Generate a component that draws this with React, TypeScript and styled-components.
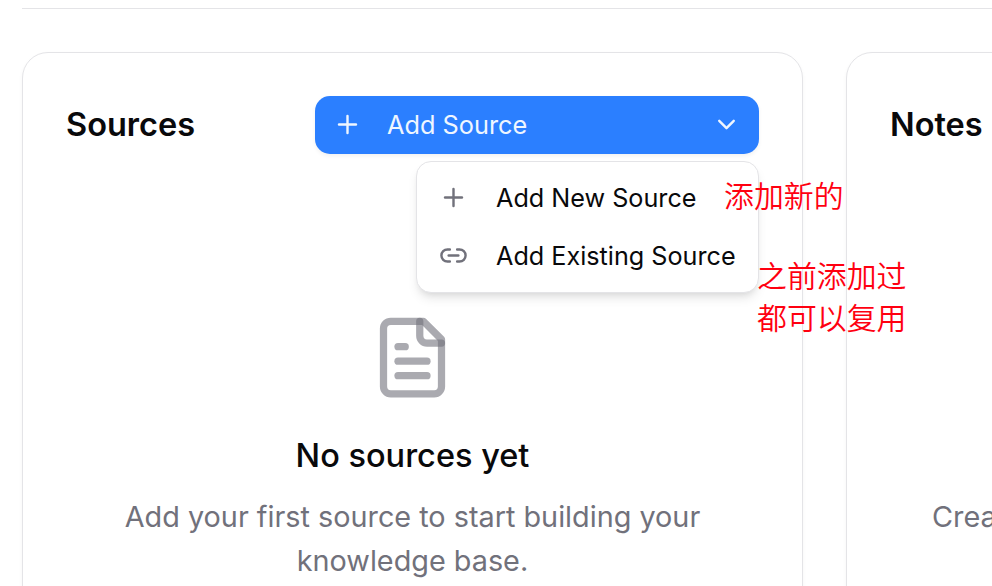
import { ChevronDown, Link2, Plus } from "lucide-react";
import styled, { createGlobalStyle } from "styled-components";

const GlobalStyle = createGlobalStyle`
     * {
          box-sizing: border-box;
     }

     body {
          margin: 0;
          background-color: #fff;
          color: #09090b;
          font-family: Inter, "Noto Sans CJK SC", sans-serif;
          overflow: hidden;
     }
`;

const Page = styled.main`
     position: relative;
     width: 992px;
     height: 586px;
     padding: 8px 0 0 22px;
     overflow: hidden;
`;

const Divider = styled.hr`
     height: 1px;
     margin: 0 0 43px;
     border: 0;
     background-color: #e4e4e7;
`;

const Columns = styled.div`
     display: flex;
     gap: 43px;
`;

const Card = styled.section`
     flex: 0 0 781px;
     height: 640px;
     padding: 43px;
     border: 1px solid #e4e4e7;
     border-radius: 26px;
     box-shadow: 0 2px 4px rgba(0, 0, 0, 0.04);
`;

const CardHeader = styled.header`
     display: flex;
     align-items: center;
     justify-content: space-between;
     height: 58px;
`;

const CardTitle = styled.h2`
     margin: 0;
     font-size: 32.5px;
     font-weight: 600;
     line-height: 44px;
`;

const MenuAnchor = styled.div`
     position: relative;
`;

const AddButton = styled.button`
     display: flex;
     align-items: center;
     gap: 25px;
     width: 444px;
     height: 58px;
     padding: 0 18px 1px;
     border: 0;
     border-radius: 15px;
     background-color: #2b7fff;
     color: #eff6ff;
     font: 400 25.3px Inter, sans-serif;
     box-shadow: 0 2px 4px rgba(0, 0, 0, 0.06);
`;

const ButtonLabel = styled.span`
     flex: 1;
     line-height: 36px;
     padding-top: 1px;
     text-align: left;
`;

const Menu = styled.ul`
     position: absolute;
     top: 65px;
     right: 0;
     width: 343px;
     margin: 0;
     padding: 7px;
     border: 1px solid #e4e4e7;
     border-radius: 15px;
     background-color: #fff;
     box-shadow: 0 7px 11px -2px rgba(0, 0, 0, 0.1), 0 4px 7px -4px rgba(0, 0, 0, 0.1);
     list-style: none;
`;

const MenuItem = styled.li`
     display: flex;
     align-items: center;
     gap: 28px;
     height: 58px;
     padding: 0 14px 1px 15px;
     font-size: 25.2px;
     line-height: 36px;
     white-space: nowrap;

     svg {
          flex: none;
          color: #71717b;
     }
`;

const EmptyState = styled.div`
     display: flex;
     flex-direction: column;
     align-items: center;
     padding: 160px 43px 0;
     text-align: center;
`;

const FileIcon = styled.svg`
     width: 87px;
     height: 87px;
     fill: none;
     stroke: #71717b;
     stroke-width: 2;
     stroke-linecap: round;
     stroke-linejoin: round;
     stroke-opacity: 0.6;
`;

const EmptyTitle = styled.h3`
     margin: 33px 0 17px;
     font-size: 32.5px;
     font-weight: 500;
     line-height: 44px;
`;

const EmptyText = styled.p`
     margin: 0;
     color: #71717b;
     font-size: 28.8px;
     line-height: 44px;
`;

const NotesText = styled(EmptyText)`
     padding: 341px 0 0 42px;
     white-space: nowrap;
`;

const Annotation = styled.p<{ $x: number; $y: number }>`
     position: absolute;
     left: ${({ $x }) => $x}px;
     top: ${({ $y }) => $y}px;
     margin: 0;
     color: #ff0010;
     font: 350 29.9px/42px "Noto Sans CJK SC", sans-serif;
     white-space: pre-line;
`;

function App() {
     return (
          <>
               <GlobalStyle />
               <Page>
                    <Divider />
                    <Columns>
                         <Card>
                              <CardHeader>
                                   <CardTitle>Sources</CardTitle>
                                   <MenuAnchor>
                                        <AddButton>
                                             <Plus size={29} />
                                             <ButtonLabel>Add Source</ButtonLabel>
                                             <ChevronDown size={29} />
                                        </AddButton>
                                        <Menu>
                                             <MenuItem>
                                                  <Plus size={29} />
                                                  Add New Source
                                             </MenuItem>
                                             <MenuItem>
                                                  <Link2 size={29} />
                                                  Add Existing Source
                                             </MenuItem>
                                        </Menu>
                                   </MenuAnchor>
                              </CardHeader>
                              <EmptyState>
                                   <FileIcon viewBox="0 0 24 24">
                                        <path d="M15 2H6a2 2 0 0 0-2 2v16a2 2 0 0 0 2 2h12a2 2 0 0 0 2-2V7Z" />
                                        <path d="M14 2v4a2 2 0 0 0 2 2h4" />
                                        <path d="M10 9H8" />
                                        <path d="M16 13H8" />
                                        <path d="M16 17H8" />
                                   </FileIcon>
                                   <EmptyTitle>No sources yet</EmptyTitle>
                                   <EmptyText>Add your first source to start building your knowledge base.</EmptyText>
                              </EmptyState>
                         </Card>
                         <Card>
                              <CardHeader>
                                   <CardTitle>Notes</CardTitle>
                              </CardHeader>
                              <NotesText>Create</NotesText>
                         </Card>
                    </Columns>
                    <Annotation $x={724} $y={173}>添加新的</Annotation>
                    <Annotation $x={757} $y={253}>{"之前添加过\n都可以复用"}</Annotation>
               </Page>
          </>
     );
}

export default App;
